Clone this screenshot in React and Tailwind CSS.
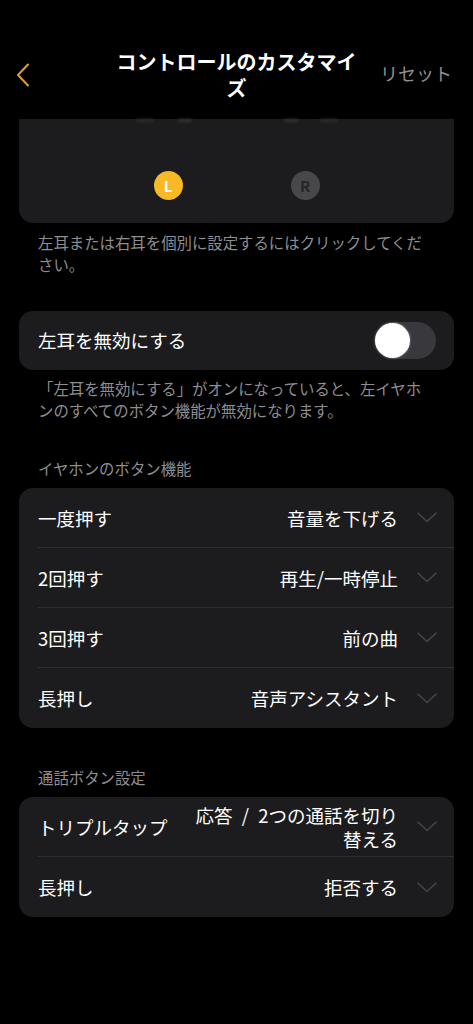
import React from "react";

const FONT = { fontFamily: '"Noto Sans CJK JP", "Noto Sans", sans-serif' };

function Chevron() {
  return (
    <svg width="20" height="11" viewBox="0 0 20 11" fill="none" className="shrink-0">
      <path d="M1 1.2 L10 9.5 L19 1.2" stroke="#434346" strokeWidth="1.6" strokeLinecap="round" strokeLinejoin="round" />
    </svg>
  );
}

function Row({ label, value, last, tall }) {
  return (
    <div className="pl-[19px]">
      <div className={`flex items-center pr-[17px] h-[60px] ${last ? "" : "border-b border-[#2e2e31]"}`}>
        <div className="flex-1 text-[18.5px] text-white leading-[24px] whitespace-nowrap">{label}</div>
        <div className={`text-[18.5px] leading-[24px] text-white text-right ${tall ? "w-[206px]" : ""}`}>{value}</div>
        <div className="ml-[19px]">
          <Chevron />
        </div>
      </div>
    </div>
  );
}

export default function App() {
  return (
    <div className="min-h-[1024px] w-full bg-black" style={FONT}>
      {/* Header */}
      <div className="h-[119px] pt-[49px] grid grid-cols-[1fr_250px_1fr] items-start">
        <div className="pl-[16px] pt-[14px]">
          <svg width="14" height="24" viewBox="0 0 14 24" fill="none">
            <path d="M12 1.5 L2 12 L12 22.5" stroke="#d9a22c" strokeWidth="2" strokeLinecap="round" strokeLinejoin="round" />
          </svg>
        </div>
        <div className="text-center text-[20px] leading-[26px] font-bold text-white">
          コントロールのカスタマイズ
        </div>
        <div className="flex justify-end pr-[21px] pt-[12px] text-[18px] leading-[24px] text-[#8e8e92]">リセット</div>
      </div>

      {/* Earbud card (scrolled) */}
      <div className="mx-[19px] h-[104px] rounded-b-[14px] bg-[#1c1c1e] flex flex-col">
        <div className="flex justify-center gap-[92px] h-[3px]">
          <div className="flex gap-[24px]">
            <div className="w-[18px] h-[3px] rounded-full bg-[#2c2c2e] blur-[1.5px]" />
            <div className="w-[14px] h-[3px] rounded-full bg-[#343436] blur-[1.5px]" />
          </div>
          <div className="flex gap-[22px]">
            <div className="w-[14px] h-[3px] rounded-full bg-[#343436] blur-[1.5px]" />
            <div className="w-[18px] h-[3px] rounded-full bg-[#2c2c2e] blur-[1.5px]" />
          </div>
        </div>
        <div className="flex justify-center gap-[108px] pt-[49px]">
          <div className="w-[29px] h-[29px] rounded-full bg-[#f7b925] flex items-center justify-center text-white text-[15px] font-bold leading-none">L</div>
          <div className="w-[29px] h-[29px] rounded-full bg-[#48484a] flex items-center justify-center text-[#252527] text-[15px] font-bold leading-none">R</div>
        </div>
      </div>

      <div className="mt-[8px] ml-[38px] w-[392px] text-[15.4px] leading-[22px] text-[#8d8d92]">
        左耳または右耳を個別に設定するにはクリックしてください。
      </div>

      {/* Disable left ear */}
      <div className="mt-[36px] mx-[19px] h-[59px] rounded-[14px] bg-[#1c1c1e] flex items-center pl-[19px] pr-[18px]">
        <div className="flex-1 text-[18.5px] text-white">左耳を無効にする</div>
        <div className="w-[61px] h-[37px] rounded-full bg-[#39393d] flex items-center">
          <div className="w-[35px] h-[35px] rounded-full bg-white shadow-[0_0_3px_rgba(255,255,255,0.4)]" />
        </div>
      </div>

      <div className="mt-[7px] ml-[38px] w-[392px] text-[15.4px] leading-[22px] text-[#8d8d92]">
        「左耳を無効にする」がオンになっていると、左イヤホンのすべてのボタン機能が無効になります。
      </div>

      <div className="mt-[36px] ml-[38px] text-[15.4px] leading-[22px] text-[#8d8d92]">イヤホンのボタン機能</div>

      <div className="mt-[9px] mx-[19px] rounded-[14px] bg-[#1c1c1e]">
        <Row label="一度押す" value="音量を下げる" />
        <Row label="2回押す" value="再生/一時停止" />
        <Row label="3回押す" value="前の曲" />
        <Row label="長押し" value="音声アシスタント" last />
      </div>

      <div className="mt-[38px] ml-[38px] text-[15.4px] leading-[22px] text-[#8d8d92]">通話ボタン設定</div>

      <div className="mt-[9px] mx-[19px] rounded-[14px] bg-[#1c1c1e]">
        <Row label="トリプルタップ" value={"応答\u2002/\u20022つの通話を切り替える"} tall />
        <Row label="長押し" value="拒否する" last />
      </div>
    </div>
  );
}
